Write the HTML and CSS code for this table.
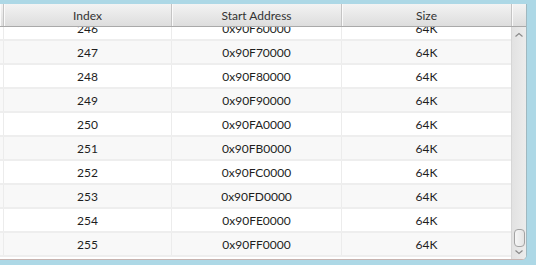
FILE: index.html
```html
<!DOCTYPE html>
<html>
<head>
<meta charset="utf-8">
<link rel="stylesheet" href="styles.css">
</head>
<body>
<div class="window">
  <div class="header">
    <div class="hcell stub"></div>
    <div class="hcell col">Index</div>
    <div class="hcell col">Start Address</div>
    <div class="hcell col">Size</div>
    <div class="hcell corner"></div>
  </div>
  <div class="body">
    <div class="rows">
      <div class="row first"><div class="cell stub"></div><div class="cell col">246</div><div class="cell col">0x90F60000</div><div class="cell col">64K</div></div>
      <div class="row alt"><div class="cell stub"></div><div class="cell col">247</div><div class="cell col">0x90F70000</div><div class="cell col">64K</div></div>
      <div class="row"><div class="cell stub"></div><div class="cell col">248</div><div class="cell col">0x90F80000</div><div class="cell col">64K</div></div>
      <div class="row alt"><div class="cell stub"></div><div class="cell col">249</div><div class="cell col">0x90F90000</div><div class="cell col">64K</div></div>
      <div class="row"><div class="cell stub"></div><div class="cell col">250</div><div class="cell col">0x90FA0000</div><div class="cell col">64K</div></div>
      <div class="row alt"><div class="cell stub"></div><div class="cell col">251</div><div class="cell col">0x90FB0000</div><div class="cell col">64K</div></div>
      <div class="row"><div class="cell stub"></div><div class="cell col">252</div><div class="cell col">0x90FC0000</div><div class="cell col">64K</div></div>
      <div class="row alt"><div class="cell stub"></div><div class="cell col">253</div><div class="cell col">0x90FD0000</div><div class="cell col">64K</div></div>
      <div class="row"><div class="cell stub"></div><div class="cell col">254</div><div class="cell col">0x90FE0000</div><div class="cell col">64K</div></div>
      <div class="row alt"><div class="cell stub"></div><div class="cell col">255</div><div class="cell col">0x90FF0000</div><div class="cell col">64K</div></div>
    </div>
    <div class="scrollbar">
      <svg class="arrow" width="14" height="10" viewBox="0 0 14 10"><path d="M3.5 6.5 L7 3.5 L10.5 6.5" fill="none" stroke="#8a8a8a" stroke-width="1.2"/></svg>
      <div class="track"><div class="thumb"></div></div>
      <svg class="arrow" width="14" height="10" viewBox="0 0 14 10"><path d="M3.5 3.5 L7 6.5 L10.5 3.5" fill="none" stroke="#8a8a8a" stroke-width="1.2"/></svg>
    </div>
  </div>
</div>
</body>
</html>
```

FILE: styles.css
```css
html, body {
  margin: 0;
  padding: 0;
}
body {
  background: #add8e6;
  width: 536px;
  height: 265px;
  overflow: hidden;
  font-family: Lato, "Open Sans", sans-serif;
  font-size: 12px;
  color: #1e1e1e;
}
.window {
  margin-top: 4px;
  width: 526px;
  height: 255px;
  background: #fff;
  border-right: 1px solid #9fb8c0;
  border-bottom: 1px solid #c8b4b0;
  border-bottom-right-radius: 5px;
  display: flex;
  flex-direction: column;
  overflow: hidden;
}
.header {
  display: flex;
  height: 22px;
  border-bottom: 1px solid #a9a9a9;
  background: linear-gradient(#f3f3f3, #dddddd);
  flex: none;
}
.hcell {
  border-right: 1px solid #c4c4c4;
  box-shadow: inset 1px 0 0 #fafafa;
  display: flex;
  align-items: center;
  justify-content: center;
  color: #333;
}
.stub { width: 3px; flex: none; }
.col { width: 169px; flex: none; }
.hcell.col:nth-child(2) { width: 167px; }
.corner { flex: 1; border-right: none; }
.body {
  flex: 1;
  display: flex;
  min-height: 0;
}
.rows {
  flex: 1;
  overflow: hidden;
}
.row {
  display: flex;
  height: 22px;
  border-bottom: 2px solid #eeeeee;
  background: #ffffff;
}
.row.alt { background: #f8f8f8; }
.row.first { margin-top: -10px; }
.cell {
  border-right: 1px solid #ececec;
  display: flex;
  align-items: center;
  justify-content: center;
}
.cell.col:nth-child(2) { width: 167px; }
.cell.col:nth-child(4) { border-right: none; }
.scrollbar {
  width: 14px;
  flex: none;
  border-left: 1px solid #d6d6d6;
  background: linear-gradient(90deg, #e2e2e2, #ececec);
  display: flex;
  flex-direction: column;
  align-items: center;
}
.arrow { flex: none; margin-top: 3px; }
.track {
  flex: 1;
  width: 100%;
  display: flex;
  flex-direction: column;
  justify-content: flex-end;
  align-items: center;
}
.thumb {
  width: 9px;
  height: 16px;
  border: 1px solid #a3a3a3;
  border-radius: 4px;
  background: linear-gradient(90deg, #f6f6f6, #e4e4e4);
}
.arrow:last-child { margin-top: 0; margin-bottom: 2px; }
```
